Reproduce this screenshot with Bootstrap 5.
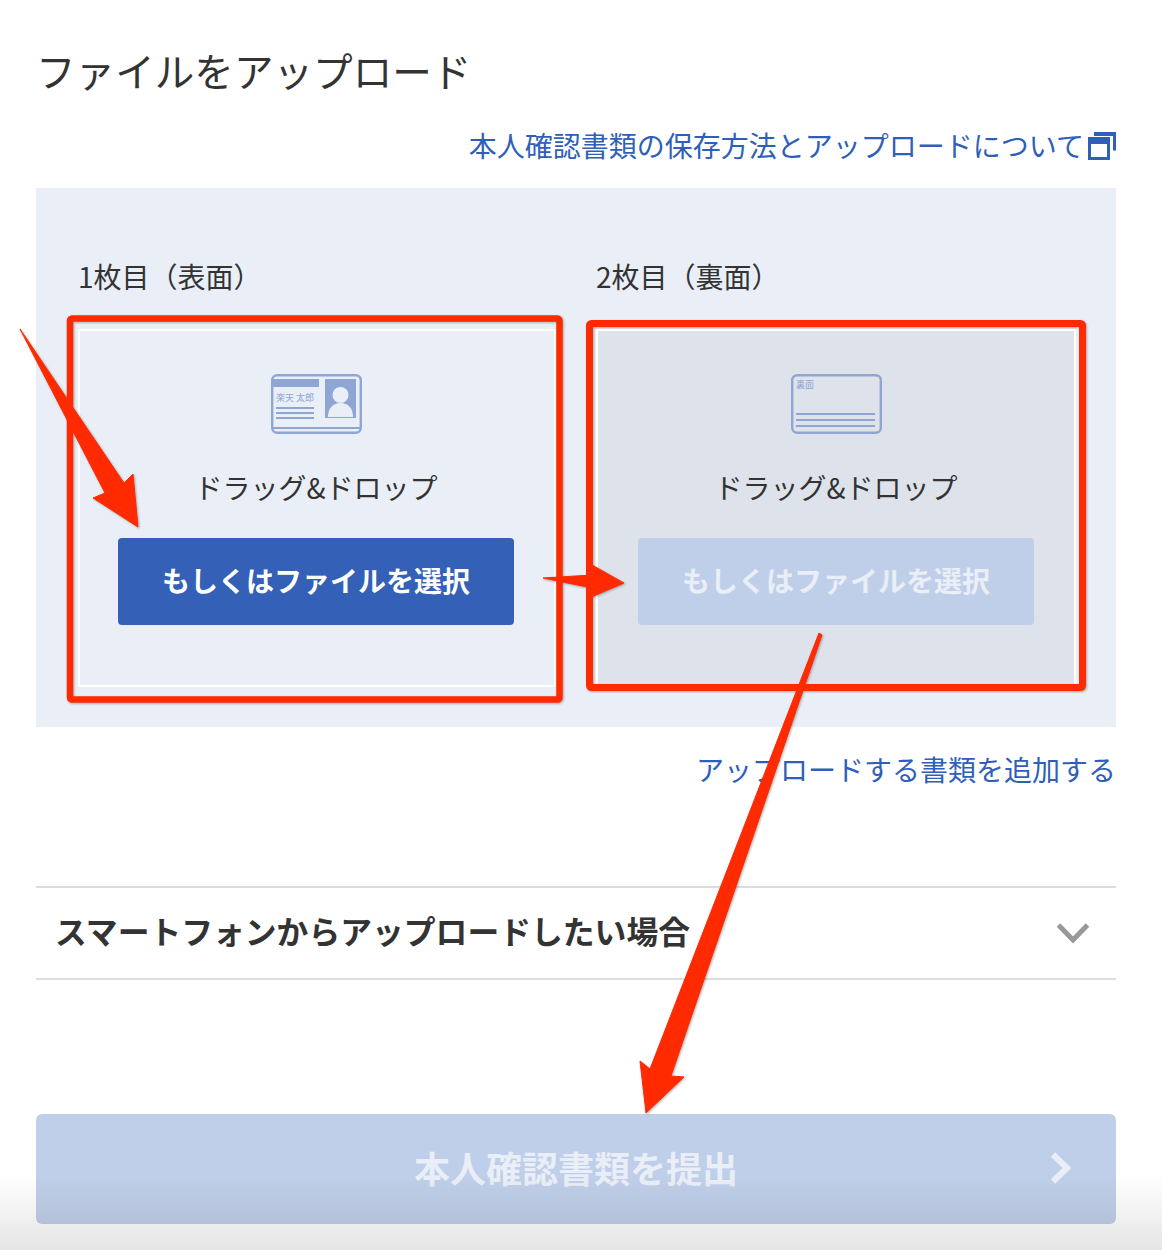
<!DOCTYPE html>
<html lang="ja">

<head>
    <meta charset="UTF-8">
    <meta name="viewport" content="width=device-width, initial-scale=1.0">
    <title>ファイルをアップロード</title>
    <link href="https://cdn.jsdelivr.net/npm/bootstrap@5.3.3/dist/css/bootstrap.min.css" rel="stylesheet">
    <style>
        body {
            font-family: "Noto Sans CJK JP", "Liberation Sans", sans-serif;
            color: #333;
            background: #fff;
        }

        a {
            color: #2f5fb8;
            text-decoration: none;
        }

        .page-wrap {
            height: 1250px;
            padding: 0 46px 0 36px;
            overflow: hidden;
        }

        .page-title {
            margin: 46px 0 0;
            font-size: 39.600px;
            line-height: 48px;
            font-weight: 400;
            color: #333;
        }

        .guide-link {
            margin-top: 32px;
            height: 40px;
            font-size: 28px;
            line-height: 38px;
        }

        .guide-link a {
            margin-bottom: 2px;
        }

        .upload-panel {
            margin-top: 22px;
            padding: 69px 40px 40px 42px;
            background: #e9eef7;
        }

        .upload-cols {
            gap: 40px;
        }

        .side-label {
            height: 40px;
            margin-bottom: 32px;
            font-size: 28px;
            line-height: 39px;
            white-space: nowrap;
        }

        .col-front {
            width: 478px;
        }

        .col-back {
            width: 480px;
        }

        .drop-zone {
            height: 358px;
            padding: 43px 40px 0;
            border: 2px solid #fff;
            text-align: center;
        }

        .col-front .drop-zone {
            padding-left: 38px;
        }

        .col-back .drop-zone {
            background: #dee3eb;
        }

        .drop-text {
            margin-top: 33px;
            font-size: 28px;
            line-height: 40px;
        }

        .card-icon {
            display: block;
            margin: 0 auto;
        }

        .pick-btn {
            display: block;
            width: 100%;
            height: 87px;
            margin-top: 31px;
            padding: 0 0 4px;
            border: 0;
            border-radius: 4px;
            font-size: 28px;
            font-weight: 700;
            background: #3460b8;
            color: #fff;
        }

        .pick-btn:disabled {
            background: #c0cfe9;
            color: #e9eef7;
            opacity: 1;
        }

        .add-link {
            margin-top: 22px;
            height: 41px;
            font-size: 28px;
            line-height: 40px;
        }

        .phone-row {
            height: 94px;
            margin-top: 96px;
            padding: 0 26px 4px 19px;
            border-top: 2px solid #ddd;
            border-bottom: 2px solid #ddd;
            font-size: 31.800px;
            font-weight: 700;
        }

        .phone-row svg {
            margin-top: 4px;
        }

        .submit-btn {
            display: block;
            width: 100%;
            height: 110px;
            margin-top: 134px;
            padding: 0 0 4px;
            border: 0;
            border-radius: 6px;
            font-size: 36px;
            font-weight: 700;
            background: #c0cfe9;
            color: #e9eef7;
        }

        .submit-btn:disabled {
            background: #c0cfe9;
            color: #e9eef7;
            opacity: 1;
        }

        .submit-arrow {
            top: 38px;
            right: 44px;
        }

        .bottom-fade {
            left: 0;
            right: 0;
            bottom: 0;
            height: 75px;
            background: linear-gradient(rgba(0, 0, 0, 0), rgba(0, 0, 0, .1));
            pointer-events: none;
        }

        .markup-layer {
            top: 0;
            left: 0;
            pointer-events: none;
            filter: drop-shadow(1px 1px 1px rgba(0, 0, 0, .3));
        }
    </style>
</head>

<body>
    <div class="page-wrap position-relative">
        <h1 class="page-title">ファイルをアップロード</h1>

        <div class="guide-link d-flex justify-content-end align-items-center">
            <a href="#">本人確認書類の保存方法とアップロードについて</a>
            <svg class="ms-1" width="28" height="28" viewBox="0 0 28 28" fill="none">
                <path d="M6 1.500h20.500v17" stroke="#2f5fb8" stroke-width="3" />
                <path d="M6 0h22v4H6z" fill="#2f5fb8" />
                <rect x="1.500" y="6.500" width="19" height="20" fill="#fff" stroke="#2f5fb8" stroke-width="3" />
                <rect x="1" y="6" width="20" height="6" fill="#2f5fb8" />
            </svg>
        </div>

        <div class="upload-panel">
            <div class="upload-cols d-flex">
                <div class="col-front">
                    <div class="side-label">1枚目（表面）</div>
                    <div class="drop-zone">
                        <svg class="card-icon" width="91" height="60" viewBox="0 0 91 60">
                            <rect x="1.200" y="1.200" width="88.600" height="57.600" rx="5" fill="none" stroke="#8fa6d5" stroke-width="2.400" />
                            <rect x="1" y="5" width="47" height="8" fill="#8fa6d5" />
                            <rect x="54" y="5" width="31" height="39" fill="#8fa6d5" />
                            <circle cx="69.500" cy="21" r="8" fill="#e9eef7" />
                            <path d="M57 43c0-9 5-14 12.500-14S82 34 82 43z" fill="#e9eef7" />
                            <text x="5" y="26.500" font-size="9" fill="#8fa6d5">楽天 太郎</text>
                            <path d="M5 34h38M5 39h38M5 44h38M1 54h89" stroke="#8fa6d5" stroke-width="2" />
                        </svg>
                        <div class="drop-text">ドラッグ&amp;ドロップ</div>
                        <button class="pick-btn" type="button">もしくはファイルを選択</button>
                    </div>
                </div>

                <div class="col-back">
                    <div class="side-label">2枚目（裏面）</div>
                    <div class="drop-zone">
                        <svg class="card-icon" width="91" height="60" viewBox="0 0 91 60">
                            <rect x="1.200" y="1.200" width="88.600" height="57.600" rx="5" fill="none" stroke="#8fa6d5" stroke-width="2.400" />
                            <text x="5" y="13.500" font-size="9" fill="#8fa6d5">裏面</text>
                            <path d="M5 40h79M5 46h79M5 52h79" stroke="#8fa6d5" stroke-width="2" />
                        </svg>
                        <div class="drop-text">ドラッグ&amp;ドロップ</div>
                        <button class="pick-btn" type="button" disabled>もしくはファイルを選択</button>
                    </div>
                </div>
            </div>
        </div>

        <div class="add-link text-end"><a href="#">アップロードする書類を追加する</a></div>

        <div class="phone-row d-flex justify-content-between align-items-center">
            <span>スマートフォンからアップロードしたい場合</span>
            <svg width="34" height="22" viewBox="0 0 34 22" fill="none">
                <path d="M2.500 3 17 18 31.500 3" stroke="#999" stroke-width="5" />
            </svg>
        </div>

        <button class="submit-btn position-relative" type="button" disabled>
            本人確認書類を提出
            <svg class="submit-arrow position-absolute" width="22" height="32" viewBox="0 0 22 32" fill="none">
                <path d="M3 2.500 17 16 3 29.500" stroke="#e9eef7" stroke-width="6" />
            </svg>
        </button>

        <div class="bottom-fade position-absolute"></div>

        <!-- red annotations drawn on top of the screenshot -->
        <svg class="markup-layer position-absolute" width="1162" height="1250" viewBox="0 0 1162 1250" fill="none">
            <rect x="70" y="318.500" width="489.500" height="381" rx="2" stroke="#ff2a00" stroke-width="6.500" />
            <rect x="589.500" y="323.500" width="493" height="364" rx="2" stroke="#ff2a00" stroke-width="7" />
            <path d="M20 329 124 483 133 474 138 527 93 498 105 493Z" fill="#ff2a00" stroke="#ff2a00" stroke-linejoin="round" />
            <path d="M543 578 592 575 592 565 624 583 589 598 592 588Z" fill="#ff2a00" stroke="#ff2a00" stroke-linejoin="round" />
            <path d="M819 633 822 635 671 1076 684 1077 646 1113 640 1061 650 1069Z" fill="#ff2a00" stroke="#ff2a00" stroke-linejoin="round" />
        </svg>
    </div>

    <script src="https://cdn.jsdelivr.net/npm/bootstrap@5.3.3/dist/js/bootstrap.bundle.min.js"></script>
</body>

</html>
